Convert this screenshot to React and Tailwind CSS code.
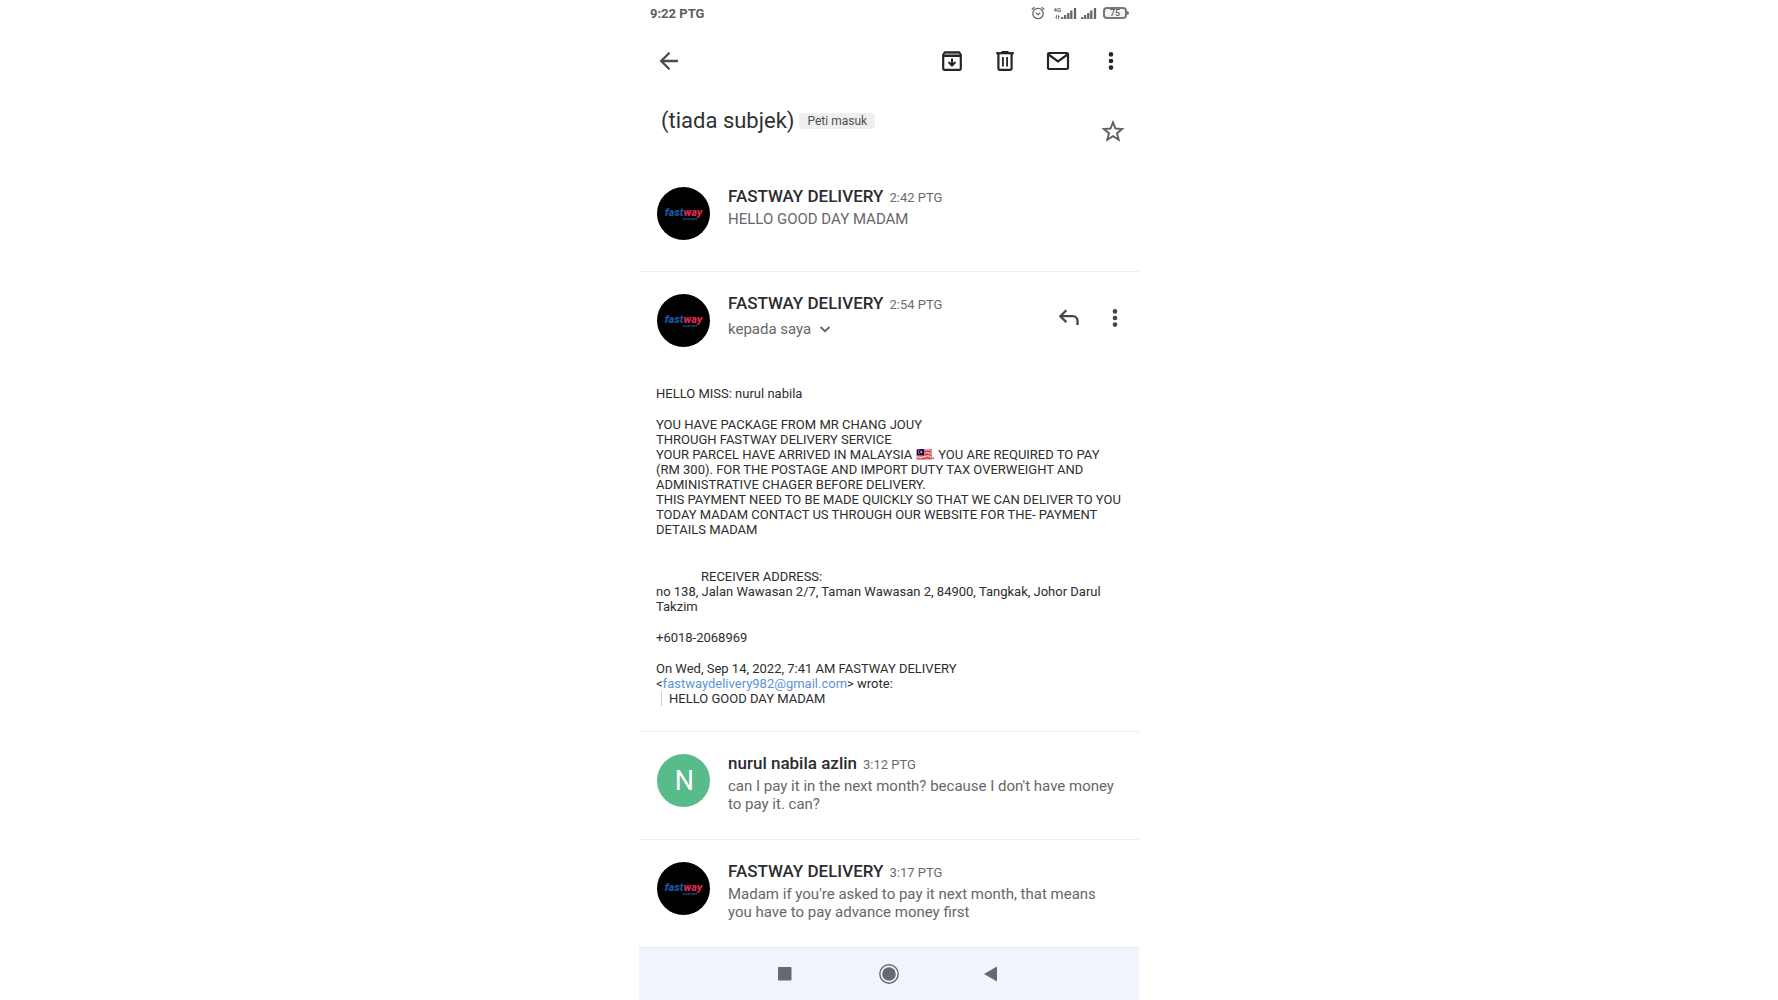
import React from 'react';

const Svg = ({ w, h = w, children, className = '' }) => (
  <svg width={w} height={h} viewBox={`0 0 ${w} ${h}`} fill="none" className={className} aria-hidden="true">
    {children}
  </svg>
);

const BackIcon = () => (
  <Svg w={24}>
    <path d="M21 12H4.500M12.500 3.700 4.200 12l8.300 8.300" stroke="#4a4b4d" strokeWidth="2.300" />
  </Svg>
);

const ArchiveIcon = () => (
  <Svg w={24}>
    <path d="M3 6.500 5 3h14l2 3.500z" fill="#8a8a8a" />
    <path d="M3.200 7V5.500L5 3.200h14l1.800 2.300V7" stroke="#252525" strokeWidth="2" strokeLinejoin="round" />
    <path d="M3.200 7h17.600v12.800a1 1 0 0 1-1 1H4.200a1 1 0 0 1-1-1z" stroke="#252525" strokeWidth="2.200" strokeLinejoin="round" />
    <path d="M12 9.500v6M8.500 13l3.500 3.500 3.500-3.500" stroke="#252525" strokeWidth="2" />
  </Svg>
);

const TrashIcon = () => (
  <Svg w={24}>
    <path d="M3.200 4.200h17.600" stroke="#252525" strokeWidth="2.200" />
    <path d="M8.500 3h7" stroke="#252525" strokeWidth="2" />
    <path d="M5.400 5v14.600a1.200 1.200 0 0 0 1.200 1.200h10.800a1.200 1.200 0 0 0 1.200-1.200V5" stroke="#252525" strokeWidth="2.200" />
    <path d="M9.900 8v9.500M14.100 8v9.500" stroke="#252525" strokeWidth="1.800" />
  </Svg>
);

const MailIcon = () => (
  <Svg w={24}>
    <rect x="2" y="4" width="20" height="16" rx="1.200" stroke="#252525" strokeWidth="2.200" />
    <path d="m2.500 5.500 9.500 7 9.500-7" stroke="#252525" strokeWidth="2.200" />
  </Svg>
);

const DotsIcon = ({ color }) => (
  <Svg w={24}>
    <g fill={color}>
      <circle cx="12" cy="5.400" r="2.300" />
      <circle cx="12" cy="12" r="2.300" />
      <circle cx="12" cy="18.600" r="2.300" />
    </g>
  </Svg>
);

const StarIcon = () => (
  <Svg w={24}>
    <path
      d="m12 3.300 2.500 6.200 6.700.5-5.200 4.200 1.700 6.500-5.700-3.600-5.700 3.600L8 14.200 2.800 10l6.700-.5z"
      stroke="#5f6063"
      strokeWidth="1.900"
    />
  </Svg>
);

const ReplyIcon = () => (
  <Svg w={24}>
    <path d="M9.300 4.300 3.400 10.200l5.900 5.900" stroke="#444547" strokeWidth="2.300" />
    <path d="M3.800 10.200h12.200a4.500 4.500 0 0 1 4.500 4.500v4.300" stroke="#444547" strokeWidth="2.300" />
  </Svg>
);

const ChevronIcon = () => (
  <Svg w={12}>
    <path d="m1.500 4 4.500 4.200L10.500 4" stroke="#5f6368" strokeWidth="1.800" />
  </Svg>
);

const AlarmIcon = () => (
  <Svg w={14}>
    <circle cx="7" cy="7.500" r="5.200" stroke="#666" strokeWidth="1.300" />
    <path d="M4.800 6.800 7 8.600l2.200-1.800" stroke="#666" strokeWidth="1.200" />
    <path d="M.8 3.600 3.400 1.300M13.200 3.600l-2.600-2.300" stroke="#666" strokeWidth="1.300" />
  </Svg>
);

const SignalIcon = () => (
  <Svg w={16} h={12}>
    <path d="M1.200 12v-2M4.200 12V8M7.300 12V6M10.300 12V3.500M14 12V1" stroke="#666" strokeWidth="2.300" />
  </Svg>
);

const DataArrowsIcon = () => (
  <Svg w={5} h={4}>
    <path d="M1.500 0v3.500M.3 2.300l1.200 1.200M3.500 4V.5M4.700 1.700 3.500.5" stroke="#777" />
  </Svg>
);

const FastwayAvatar = () => (
  <div className="flex size-[53px] shrink-0 flex-col items-center justify-center rounded-full bg-black">
    <span className="text-[11px] leading-[11px] font-black text-[#1b559f] italic">
      fast<span className="text-[#dd2550]">way</span>
    </span>
    <Svg w={16} h={2} className="ml-3">
      <path d="M1 1h14" stroke="#1b4a86" strokeWidth="1.500" strokeDasharray="2 .5" />
    </Svg>
  </div>
);

const LetterAvatar = ({ letter }) => (
  <div className="flex size-[53px] shrink-0 items-center justify-center rounded-full bg-[#58bb8a] pl-0.5 text-[27px] leading-8 text-white">
    {letter}
  </div>
);

const Sender = ({ name, time }) => (
  <h2 className="flex items-baseline gap-1.5 text-[17px] leading-[18px] font-medium text-[#2b2c2e]">
    {name}
    <time className="text-[13px] font-normal text-[#6a6b6e]">{time}</time>
  </h2>
);

const Message = ({ avatar, name, time, first = false, children }) => (
  <article
    className={`flex gap-[18px] pt-[22px] pr-4 pl-[18px] ${first ? 'min-h-[106px]' : 'min-h-[108px] border-t border-[#efefef]'}`}
  >
    {avatar}
    <div>
      <Sender name={name} time={time} />
      <p className="mt-[3px] text-[15px] leading-[18px] text-[#66676a]">{children}</p>
    </div>
  </article>
);

const IconButton = ({ label, children }) => (
  <button type="button" aria-label={label} className="flex size-6 items-center justify-center">
    {children}
  </button>
);

export default function App() {
  return (
    <div className="min-h-screen bg-white font-['Roboto',sans-serif]">
      <div className="mx-auto flex min-h-screen w-full max-w-[500px] flex-col">
        <div className="flex items-center justify-between pt-[5px] pr-[10px] pl-[11px] text-[13px] leading-[18px] font-bold text-[#5c5d5f]">
          <span>9:22 PTG</span>
          <div className="flex items-center pb-0.5">
            <AlarmIcon />
            <div className="ml-2 flex items-end">
              <div className="flex flex-col items-center gap-0.5">
                <span className="text-[6px] leading-[6px]">4G</span>
                <DataArrowsIcon />
              </div>
              <SignalIcon />
            </div>
            <div className="ml-1 flex items-end">
              <SignalIcon />
            </div>
            <div className="ml-1.5 flex items-center">
              <span className="flex h-3 w-6 items-center justify-center rounded-sm border-2 border-[#777] bg-[#f3f3f3] text-[9px] leading-none font-medium">
                75
              </span>
              <span className="h-1 w-0.5 rounded-r-sm bg-[#777]" />
            </div>
          </div>
        </div>

        <nav className="mt-[26px] flex items-center justify-between pr-4 pl-[18px]" aria-label="Mesej">
          <IconButton label="Kembali"><BackIcon /></IconButton>
          <div className="flex items-center gap-[29px]">
            <IconButton label="Arkib"><ArchiveIcon /></IconButton>
            <IconButton label="Padam"><TrashIcon /></IconButton>
            <IconButton label="Belum dibaca"><MailIcon /></IconButton>
            <IconButton label="Lagi"><DotsIcon color="#252525" /></IconButton>
          </div>
        </nav>

        <header className="flex items-start justify-between pt-8 pr-[14px] pb-[22px] pl-[22px]">
          <div className="flex items-center gap-[5px] pt-0.5">
            <h1 className="text-[22px] leading-7 text-[#303134]">(tiada subjek)</h1>
            <span className="rounded-sm bg-[#efefef] px-2 text-[12px] leading-4 text-[#4f5052]">Peti masuk</span>
          </div>
          <div className="pt-[14px]">
            <IconButton label="Bintang"><StarIcon /></IconButton>
          </div>
        </header>

        <main className="grow">
          <Message first avatar={<FastwayAvatar />} name="FASTWAY DELIVERY" time="2:42 PTG">
            HELLO GOOD DAY MADAM
          </Message>

          <article className="border-t border-[#efefef] pt-[22px] pr-3 pb-[25px] pl-[17px]">
            <div className="flex gap-[18px] pl-px">
              <FastwayAvatar />
              <div className="grow">
                <Sender name="FASTWAY DELIVERY" time="2:54 PTG" />
                <button type="button" className="mt-1.5 flex items-center gap-2 text-[15px] leading-[18px] text-[#66676a]">
                  kepada saya
                  <ChevronIcon />
                </button>
              </div>
              <div className="flex items-start gap-[22px] pt-3">
                <IconButton label="Balas"><ReplyIcon /></IconButton>
                <IconButton label="Lagi pilihan"><DotsIcon color="#444547" /></IconButton>
              </div>
            </div>

            <div className="mt-[39px] flex flex-col gap-4 text-[13px] leading-[15px] text-[#2d2d2d]">
              <p>HELLO MISS: nurul nabila</p>
              <p>
                YOU HAVE PACKAGE FROM MR CHANG JOUY<br />
                THROUGH FASTWAY DELIVERY SERVICE<br />
                YOUR PARCEL HAVE ARRIVED IN MALAYSIA 🇲🇾. YOU ARE REQUIRED TO PAY<br />
                (RM 300). FOR THE POSTAGE AND IMPORT DUTY TAX OVERWEIGHT AND<br />
                ADMINISTRATIVE CHAGER BEFORE DELIVERY.<br />
                THIS PAYMENT NEED TO BE MADE QUICKLY SO THAT WE CAN DELIVER TO YOU<br />
                TODAY MADAM CONTACT US THROUGH OUR WEBSITE FOR THE- PAYMENT<br />
                DETAILS MADAM
              </p>
              <p className="mt-4 indent-[45px]">
                RECEIVER ADDRESS:<br />
                <span className="block indent-0">
                  no 138, Jalan Wawasan 2/7, Taman Wawasan 2, 84900, Tangkak, Johor Darul<br />
                  Takzim
                </span>
              </p>
              <p>+6018-2068969</p>
              <div>
                <p>
                  On Wed, Sep 14, 2022, 7:41 AM FASTWAY DELIVERY<br />
                  &lt;<a href="mailto:fastwaydelivery982@gmail.com" className="text-[#5b94d6]">fastwaydelivery982@gmail.com</a>&gt; wrote:
                </p>
                <blockquote className="ml-[5px] border-l border-[#d0d0d0] pl-[7px]">HELLO GOOD DAY MADAM</blockquote>
              </div>
            </div>
          </article>

          <Message avatar={<LetterAvatar letter="N" />} name="nurul nabila azlin" time="3:12 PTG">
            can I pay it in the next month? because I don't have money to pay it. can?
          </Message>
          <Message avatar={<FastwayAvatar />} name="FASTWAY DELIVERY" time="3:17 PTG">
            Madam if you're asked to pay it next month, that means you have to pay advance money first
          </Message>
        </main>

        <footer className="flex h-[53px] items-center justify-center gap-[79px] border-t border-[#e6e9f0] bg-[#f0f4fd]">
          <IconButton label="Aplikasi terkini">
            <Svg w={24}><rect x="4" y="5" width="13.500" height="13.500" rx="1" fill="#66696d" /></Svg>
          </IconButton>
          <IconButton label="Laman utama">
            <Svg w={24}>
              <circle cx="12" cy="12" r="9.200" stroke="#66696d" strokeWidth="1.400" />
              <circle cx="12" cy="12" r="6.800" fill="#66696d" />
            </Svg>
          </IconButton>
          <IconButton label="Balik">
            <Svg w={24}><path d="M17 4.500v15L4 12z" fill="#66696d" /></Svg>
          </IconButton>
        </footer>
      </div>
    </div>
  );
}
